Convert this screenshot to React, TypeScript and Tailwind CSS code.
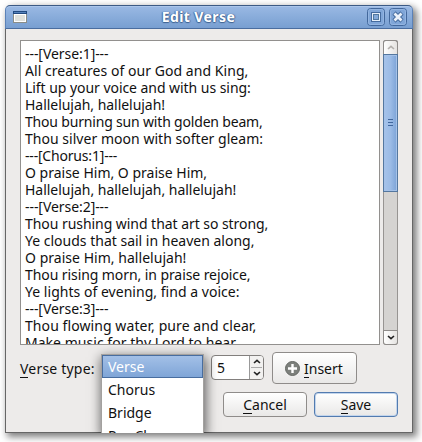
import React from "react";

type Line = { text: string; tracking: string };

const lines: Line[] = [
  { text: "---[Verse:1]---", tracking: "tracking-[-0.06px]" },
  { text: "All creatures of our God and King,", tracking: "tracking-[0.05px]" },
  { text: "Lift up your voice and with us sing:", tracking: "tracking-[-0.05px]" },
  { text: "Hallelujah, hallelujah!", tracking: "tracking-[-0.04px]" },
  { text: "Thou burning sun with golden beam,", tracking: "tracking-[-0.18px]" },
  { text: "Thou silver moon with softer gleam:", tracking: "tracking-[0.03px]" },
  { text: "---[Chorus:1]---", tracking: "tracking-[-0.19px]" },
  { text: "O praise Him, O praise Him,", tracking: "tracking-normal" },
  { text: "Hallelujah, hallelujah, hallelujah!", tracking: "tracking-[-0.03px]" },
  { text: "---[Verse:2]---", tracking: "tracking-[-0.06px]" },
  { text: "Thou rushing wind that art so strong,", tracking: "tracking-[-0.05px]" },
  { text: "Ye clouds that sail in heaven along,", tracking: "tracking-normal" },
  { text: "O praise Him, hallelujah!", tracking: "tracking-[0.03px]" },
  { text: "Thou rising morn, in praise rejoice,", tracking: "tracking-[-0.08px]" },
  { text: "Ye lights of evening, find a voice:", tracking: "tracking-[0.03px]" },
  { text: "---[Verse:3]---", tracking: "tracking-[-0.06px]" },
  { text: "Thou flowing water, pure and clear,", tracking: "tracking-[0.08px]" },
  { text: "Make music for thy Lord to hear,", tracking: "tracking-[0.03px]" },
];

function TitleBar() {
  return (
    <div className="flex h-6 shrink-0 items-center rounded-t-[5px] border-x border-t border-b border-x-[#5b82b8] border-t-[#3c5a85] border-b-[#4a6d9f] bg-linear-to-b from-[#9ab9e4] to-[#789fd1] pl-[7px] pr-[5px] shadow-[inset_0_1px_0_#abc6eb]">
      <svg width="14" height="12" viewBox="0 0 14 12" shapeRendering="crispEdges">
        <rect width="14" height="12" fill="#8a8d88" />
        <rect x="1" y="3" width="12" height="8" fill="#fff" />
        <rect x="2" y="4" width="10" height="6" fill="#dfe1dc" />
        <rect width="14" height="3" fill="#214a80" />
        <rect x="1" y="1" width="12" height="1" fill="#5582bb" />
      </svg>
      <h1 className="flex-1 pl-[3px] text-center text-[14px] leading-none font-bold tracking-[0.4px] text-white [text-shadow:0_1px_1px_#3f628f,1px_0_1px_#4c72a6,-1px_0_1px_#4c72a6]">
        Edit Verse
      </h1>
      <div className="flex gap-1">
        <button className="size-[18px]" aria-label="Maximize">
          <svg width="18" height="18" viewBox="0 0 18 18">
            <rect x="0.5" y="0.5" width="17" height="17" rx="3" fill="#80a6d8" stroke="#43689c" />
            <rect x="1.5" y="1.5" width="15" height="15" rx="2" fill="none" stroke="#94b5e1" />
            <rect x="4.5" y="4.5" width="9" height="9" fill="none" stroke="#456b9e" />
            <rect x="5.5" y="5.5" width="7" height="7" fill="none" stroke="#e6effa" />
            <rect x="6.5" y="6.5" width="5" height="5" fill="#83a9da" stroke="#52799f" />
          </svg>
        </button>
        <button className="size-[18px]" aria-label="Close">
          <svg width="18" height="18" viewBox="0 0 18 18">
            <rect x="0.5" y="0.5" width="17" height="17" rx="3" fill="#80a6d8" stroke="#43689c" />
            <rect x="1.5" y="1.5" width="15" height="15" rx="2" fill="none" stroke="#94b5e1" />
            <path d="M5 5l8 8M13 5l-8 8" stroke="#456b9e" strokeWidth="4.6" />
            <path d="M5.5 5.5l7 7M12.5 5.5l-7 7" stroke="#eaf1fa" strokeWidth="2.8" />
          </svg>
        </button>
      </div>
    </div>
  );
}

function Chevron({ down, faint }: { down?: boolean; faint?: boolean }) {
  return (
    <svg width="8" height="5" viewBox="0 0 8 5" className={down ? "rotate-180" : ""}>
      <path d="M1 4l3-2.7L7 4" fill="none" stroke={faint ? "#b3b0ad" : "#222"} strokeWidth="1.6" />
    </svg>
  );
}

function ScrollBar() {
  return (
    <div className="flex w-[15px] flex-col rounded-[3px] bg-[#d5d3d1] shadow-[inset_0_0_0_1px_#979492]">
      <div className="flex h-[14px] items-center justify-center rounded-t-[3px] border border-b-0 border-[#8f8c8a] bg-linear-to-r from-white to-[#e5e3e1]">
        <Chevron faint />
      </div>
      <div className="flex h-[138px] flex-col items-center justify-center gap-[2px] border border-[#54779f] bg-linear-to-r from-[#a6c3ea] via-[#9bbbe6] to-[#7ca3d7] pb-px shadow-[inset_0_0_0_1px_#a4c1e8]">
        <i className="h-px w-[5px] bg-[#41679d]" />
        <i className="h-px w-[5px] bg-[#41679d]" />
        <i className="h-px w-[5px] bg-[#41679d]" />
      </div>
      <div className="flex-1" />
      <div className="flex h-[15px] items-center justify-center rounded-b-[3px] border border-[#8f8c8a] bg-linear-to-r from-white to-[#e5e3e1]">
        <Chevron down />
      </div>
    </div>
  );
}

function Mnemonic({ text }: { text: string }) {
  return (
    <span>
      <span className="shadow-[0_-1px_0_#111_inset]">{text[0]}</span>
      {text.slice(1)}
    </span>
  );
}

function VersePopup() {
  return (
    <div className="absolute left-[96px] top-[349px] h-[79px] w-[103px] overflow-hidden border-x border-t border-[#a3a19f] bg-white shadow-[1px_4px_11px_1px_#00000099] [clip-path:inset(-8px_-20px_0_-20px)]">
      <div className="flex h-[23px] items-center border border-[#486d9f] bg-linear-to-b from-[#a3c0e7] to-[#7fa5d7] pl-[5px] text-white">Verse</div>
      <div className="flex h-[23px] items-center pl-[6px]">Chorus</div>
      <div className="flex h-[23px] items-center pl-[6px]">Bridge</div>
      <div className="flex h-[23px] items-center pl-[6px]">Pre-Chorus</div>
    </div>
  );
}

export default function App() {
  return (
    <div className="h-[442px] w-[422px] overflow-hidden bg-white pl-[5px] pt-[5px] font-['Noto_Sans',sans-serif] text-[14px] leading-[17px] text-[#111]">
      <div className="relative flex h-[428px] w-[408px] flex-col rounded-t-[6px] bg-[#edebea] shadow-[3px_3px_7px_1px_#00000080]">
        <TitleBar />
        <main className="flex flex-1 flex-col border-x border-b border-[#666] px-[14px] pt-[11px]">
          <div className="flex h-[305px] gap-[3px]">
            <div className="w-[360px] overflow-hidden border border-[#92908e] bg-white pl-1 pt-1">
              {lines.map((line, i) => (
                <p key={i} className={"h-[17px] w-max whitespace-nowrap " + line.tracking}>{line.text}</p>
              ))}
            </div>
            <ScrollBar />
          </div>
          <div className="mt-[7px] flex h-8 items-center">
            <label className="w-[191px] tracking-[0.2px]"><Mnemonic text="Verse type:" /></label>
            <div className="mb-px flex h-[25px] w-[53px] rounded-[4px] border border-[#827f7d] bg-white">
              <span className="flex flex-1 items-center pl-[5px]">5</span>
              <div className="flex w-[14px] flex-col items-center rounded-r-[3px] border-l border-[#999] bg-[#f2f1f0]">
                <div className="flex flex-1 items-center"><Chevron /></div>
                <i className="h-px w-[11px] bg-[#aaa]" />
                <div className="flex flex-1 items-center"><Chevron down /></div>
              </div>
            </div>
            <button className="ml-2 flex h-8 w-[85px] items-center gap-[4px] rounded-[4px] border border-[#8f8c8a] bg-linear-to-b from-white to-[#e9e8e7] pl-[12px]">
              <svg width="15" height="15" viewBox="0 0 15 15">
                <circle cx="7.5" cy="7.5" r="7" fill="#7d807c" stroke="#656864" />
                <path d="M7.5 3v9M3 7.5h9" stroke="#fff" strokeWidth="2.4" />
              </svg>
              <Mnemonic text="Insert" />
            </button>
          </div>
          <div className="mt-2 flex justify-end gap-[7px]">
            <button className="h-[25px] w-[84px] rounded-[4px] border border-[#8f8c8a] bg-linear-to-b from-white to-[#e9e8e7]"><Mnemonic text="Cancel" /></button>
            <button className="h-[25px] w-[84px] rounded-[4px] border border-[#527bb0] bg-linear-to-b from-white to-[#e9e8e7] shadow-[inset_0_0_0_1px_#c3d5ec]"><Mnemonic text="Save" /></button>
          </div>
        </main>
        <VersePopup />
      </div>
    </div>
  );
}
